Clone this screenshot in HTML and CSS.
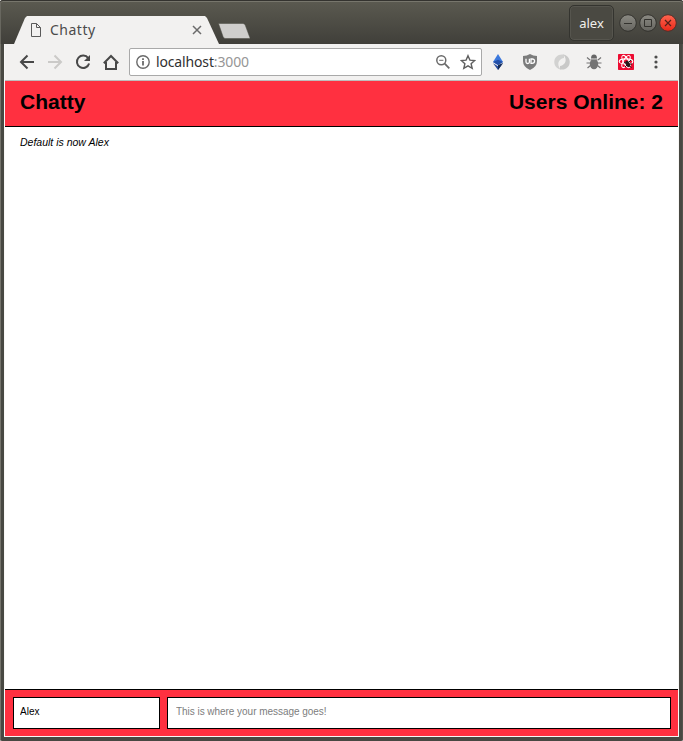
FILE: index.html
```html
<!DOCTYPE html>
<html lang="en">
<head>
<meta charset="utf-8">
<title>Chatty</title>
<link rel="stylesheet" href="styles.css">
</head>
<body>
<div class="window">
  <div class="titlebar">
    <div class="tab">
      <svg class="tab-file" width="12" height="14" viewBox="0 0 12 14" fill="none" stroke="#5a5a5a"><path d="M1.500.5h5l4 4v9h-9zM6.500.5v4h4"/></svg>
      <span class="tab-title">Chatty</span>
      <svg width="10" height="10" viewBox="0 0 10 10" stroke="#6b6b6b" stroke-width="1.500"><path d="M1 1l8 8M9 1l-8 8"/></svg>
    </div>
    <svg class="newtab" width="33" height="16" viewBox="0 0 33 16"><path d="M1.500 .5h24.500q1.500 0 2.200 1.500l5 13.500h-24.500q-1.800 0-2.500-1.500z" fill="#cfcecc" stroke="#4b4a43" stroke-width=".5"/></svg>
    <span class="user">alex</span>
    <div class="controls">
      <svg width="18" height="18" viewBox="0 0 18 18"><circle cx="9" cy="9" r="8.300" fill="url(#grey)" stroke="#33322e"/><path d="M5 9.500h8" stroke="#33322e"/></svg>
      <svg width="18" height="18" viewBox="0 0 18 18"><circle cx="9" cy="9" r="8.300" fill="url(#grey)" stroke="#33322e"/><path d="M5.500 5.500h7v7h-7z" fill="none" stroke="#33322e"/></svg>
      <svg width="18" height="18" viewBox="0 0 18 18"><defs><linearGradient id="grey" x2="0" y2="1"><stop stop-color="#8b8a83"/><stop offset="1" stop-color="#65645f"/></linearGradient><linearGradient id="red" x2="0" y2="1"><stop stop-color="#ff6650"/><stop offset="1" stop-color="#e92718"/></linearGradient></defs><circle cx="9" cy="9" r="8.300" fill="url(#red)" stroke="#53302a"/><path d="M6 6l6 6M12 6l-6 6" stroke="#542019" stroke-width="1.200"/></svg>
    </div>
  </div>
  <div class="view">
    <div class="toolbar">
      <div class="nav">
        <svg width="16" height="16" viewBox="0 0 16 16" fill="none" stroke="#484848" stroke-width="2"><path d="M15 8H2.500M8.500 1.500L2 8l6.500 6.500"/></svg>
        <svg width="16" height="16" viewBox="0 0 16 16" fill="none" stroke="#cbcac8" stroke-width="2"><path d="M1 8h12.500M7.500 1.500L14 8l-6.500 6.500"/></svg>
        <svg width="16" height="16" viewBox="0 0 16 16" fill="none" stroke="#484848" stroke-width="2"><path d="M13.200 4.200A6.200 6.200 0 1 0 14.100 9.500"/><path d="M15 1v6H9z" fill="#484848" stroke="none"/></svg>
        <svg width="16" height="16" viewBox="0 0 16 16" fill="none" stroke="#484848" stroke-width="2"><path d="M.8 9.200L8 2 15.200 9.200M3 8v7h10V8"/></svg>
      </div>
      <div class="address">
        <svg width="14" height="14" viewBox="0 0 14 14" fill="none" stroke="#6a6a6a"><circle cx="7" cy="7" r="6.200" stroke-width="1.400"/><path d="M7 6v4.500M7 3.200v1.800" stroke-width="1.800"/></svg>
        <span class="url">localhost<span class="port">:3000</span></span>
        <svg width="14" height="14" viewBox="0 0 14 14" fill="none" stroke="#6a6a6a"><circle cx="5.300" cy="5.300" r="4.500" stroke-width="1.500"/><path d="M8.700 8.700l4.600 4.600" stroke-width="1.800"/><path d="M3.200 5.300h4.200"/></svg>
        <svg class="star" width="16" height="16" viewBox="0 0 16 16" fill="none" stroke="#5f5f5f" stroke-width="1.400"><path d="M8 1.700l1.900 4.400 4.800.4-3.600 3.200 1.100 4.700L8 11.900l-4.200 2.500 1.100-4.700-3.600-3.200 4.800-.4z"/></svg>
      </div>
      <div class="extensions">
        <svg width="16" height="16" viewBox="0 0 16 16"><path d="M8 0L3 8l5 3 5-3z" fill="#3b78dc"/><path d="M8 5.700L3 8l5 3 5-3z" fill="#2450a8"/><path d="M3 9.200l5 3 5-3L8 16z" fill="#274b9c"/><path d="M8 11v5l5-7z" fill="#172d55"/></svg>
        <svg width="16" height="16" viewBox="0 0 16 16"><path d="M8 0q3 2 7 2v5q0 6-7 9-7-3-7-9V2q4 0 7-2z" fill="#7c7c7c"/><path d="M4 4.800V8q0 1.500 1.700 1.500T7.400 8V4.800M9 5v4.300h1q2.600 0 2.600-2.200T10 5z" fill="none" stroke="#fff" stroke-width="1.300"/></svg>
        <svg width="16" height="16" viewBox="0 0 16 16"><path d="M10 .6C4 -.5 0 3.500.3 8.500c.3 4 3 6.500 6.500 7C2.500 11 4 5 10 4z" fill="#d2d2d1"/><path d="M6 15.400c6 1.100 10-2.900 9.700-7.900-.3-4-3-6.500-6.500-7C13.500 5 12 11 6 12z" fill="#c9c9c8"/></svg>
        <svg width="16" height="16" viewBox="0 0 16 16" fill="none"><path d="M1 3.500l3 2.500M15 3.500l-3 2.500M.5 9h15M1.500 14l3-2.500M14.500 14l-3-2.500" stroke="#747474" stroke-width="1.200"/><ellipse cx="8" cy="10" rx="4.200" ry="5.300" fill="#747474"/><path d="M5 4.500q0-4 3-4t3 4z" fill="#666"/><path d="M4.500 5.500h7" stroke="#a0a0a0"/></svg>
        <svg width="16" height="16" viewBox="0 0 16 16" fill="none"><rect width="16" height="16" rx=".7" fill="#ed0b31"/><g stroke="#fff" stroke-width="1.100"><ellipse cx="8" cy="7.500" rx="6.800" ry="2.600"/><ellipse cx="8" cy="7.500" rx="6.800" ry="2.600" transform="rotate(60 8 7.500)"/><ellipse cx="8" cy="7.500" rx="6.800" ry="2.600" transform="rotate(120 8 7.500)"/></g><ellipse cx="9.800" cy="9.900" rx="1.900" ry="3.400" transform="rotate(-25 9.800 9.900)" fill="#241b1c"/><path d="M6 8.500l3 1M7 13l2-2M11 8l2-2M11 10h3M11 11.500l2.500 2" stroke="#241b1c"/></svg>
        <svg class="menu" width="4" height="14" viewBox="0 0 4 14" fill="#4d4d4d"><circle cx="2" cy="2" r="1.600"/><circle cx="2" cy="7" r="1.600"/><circle cx="2" cy="12" r="1.600"/></svg>
      </div>
    </div>
    <header class="header"><h1>Chatty</h1><h1>Users Online: 2</h1></header>
    <main class="messages"><p>Default is now Alex</p></main>
    <footer class="chatbar">
      <input class="field name" value="Alex" aria-label="Name">
      <input class="field message" placeholder="This is where your message goes!" aria-label="Message">
    </footer>
  </div>
</div>
</body>
</html>
```
FILE: styles.css
```css
* { box-sizing: border-box; }
body { margin: 0; background: #fff; font-family: "Liberation Sans", Arial, sans-serif; }
svg { display: block; flex: none; }
.window {
  width: 683px; height: 741px; padding: 0 4px 4px;
  display: flex; flex-direction: column;
  background: #484842;
  border-radius: 3px 3px 2px 2px;
  box-shadow: inset 1px 1px #74736b, inset -1px 0 #54534c;
}
.titlebar {
  height: 44px; flex: none; display: flex; align-items: flex-start;
  margin: 0 -4px; padding-left: 14px;
  background: linear-gradient(#5b5a50, #403f3a);
  border-top: 1px solid #34332f;
  border-radius: 3px 3px 0 0;
  box-shadow: inset 0 1px #77766c, inset 1px 0 #68675f;
  font-family: "Noto Sans", sans-serif;
}
.tab {
  width: 205px; height: 28px; margin-top: 15px; padding: 0 17px 0 16px;
  display: flex; align-items: center; background: #f2f1f0;
  clip-path: polygon(0 100%, 11px 2px, 13px 0, 191px 0, 193px 2px, 100% 100%);
}
.tab-title { flex: 1; margin-left: 8px; font-size: 14px; line-height: 20px; letter-spacing: .5px; color: #4b4b4b; }
.newtab { margin: 22px 0 0 -2px; }
.user {
  width: 45px; height: 36px; margin: 4px 5px 0 auto;
  border: 1px solid #34342f; border-radius: 5px; background: #4a4942;
  box-shadow: inset 0 0 0 1px #56554e;
  color: #f1f0ec; font-size: 13px; line-height: 34px; text-align: center;
}
.controls { display: flex; gap: 2px; margin: 13px 6px 0 0; }
.view { flex: 1; display: flex; flex-direction: column; border: 1px solid #f8f7f5; border-top: 0; }
.toolbar {
  height: 37px; flex: none; padding-left: 14px; display: flex; align-items: center;
  background: #f2f1f0; border-bottom: 1px solid #bebdbc;
}
.nav { display: flex; gap: 12px; }
.address {
  width: 353px; height: 28px; margin-left: 10px; padding: 0 5px 0 6px;
  display: flex; align-items: center; background: #fff;
  border: 1px solid #a9a9a9; border-radius: 2px;
}
.url { flex: 1; margin-left: 6px; font: 14px/20px "Noto Sans", sans-serif; letter-spacing: -.15px; color: #303030; }
.port { color: #969696; }
.star { margin-left: 10px; }
.extensions { display: flex; align-items: center; gap: 16px; margin-left: 8px; }
.menu { margin-left: 4px; }
.header {
  height: 46px; flex: none; padding: 0 15px; display: flex; justify-content: space-between;
  background: #ff3040; border-bottom: 1px solid #000;
}
.header h1 { margin: 0; font-size: 21px; line-height: 42px; }
.messages { flex: 1; padding: 9px 15px; background: #fff; }
.messages p { margin: 0; font-size: 10.5px; line-height: 13px; font-style: italic; }
.chatbar {
  height: 47px; flex: none; display: flex; gap: 7px; padding: 7px 7px 7px 8px;
  background: #ff3040; border-top: 1px solid #000;
}
.field {
  height: 32px; border: 1px solid #000; border-radius: 0; outline: 0; background: #fff; color: #000;
  font: 10px "Liberation Sans", Arial, sans-serif;
}
.name { width: 147px; padding: 0 6px 3px; }
.message { flex: 1; min-width: 0; padding: 0 8px 3px; letter-spacing: -.04px; }
.message::placeholder { color: #7d7d7d; opacity: 1; }
```
